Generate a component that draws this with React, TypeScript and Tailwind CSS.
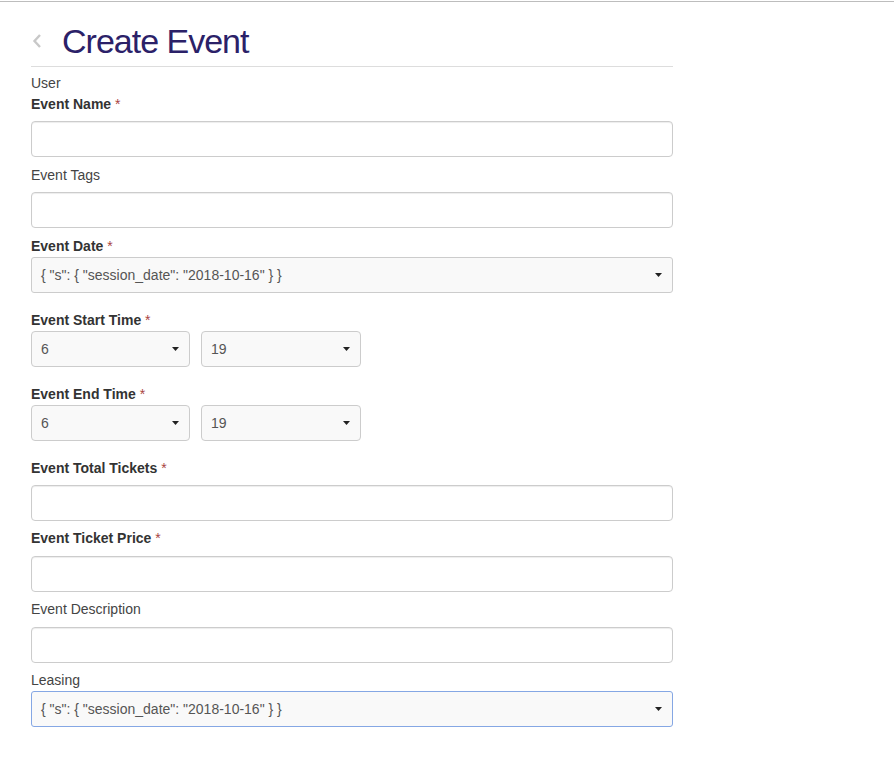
import React from 'react';

const font = { fontFamily: '"Liberation Sans", Arial, Helvetica, sans-serif' };

const Caret = () => (
  <svg width="7" height="4" viewBox="0 0 7 4" className="shrink-0">
    <path d="M0 0h7L3.5 4z" fill="#222" />
  </svg>
);

const Label: React.FC<{ text: string; required?: boolean; bold?: boolean; className?: string }> = ({
  text,
  required,
  bold = true,
  className = '',
}) => (
  <div className={`h-5 leading-5 text-[14px] ${bold ? 'font-bold text-[#333]' : 'text-[#444]'} ${className}`}>
    {text}
    {required && <span className="font-normal text-[#a94442]"> *</span>}
  </div>
);

const TextInput: React.FC<{ className?: string }> = ({ className = '' }) => (
  <div
    className={`h-9 w-full rounded-[4px] border border-[#ccc] bg-white shadow-[inset_0_1px_1px_rgba(0,0,0,0.075)] ${className}`}
  />
);

const SelectBox: React.FC<{ value: string; className?: string; focus?: boolean }> = ({
  value,
  className = '',
  focus,
}) => (
  <div
    className={`flex h-9 items-center justify-between rounded-[3px] border bg-[#f9f9f9] pl-[9px] pr-[10px] text-[14px] text-[#555] ${
      focus ? 'border-[#85a7e4]' : 'border-[#ccc]'
    } ${className}`}
  >
    <span>{value}</span>
    <Caret />
  </div>
);

const sessionValue = '{ "s": { "session_date": "2018-10-16" } }';

export default function App() {
  return (
    <div className="min-h-[769px] w-full bg-white" style={font}>
      <div className="h-px" />
      <div className="h-px bg-[#bdbdbd]" />
      <div className="ml-[31px] w-[642px]">
        <div className="mt-[19px] flex h-[46px] items-start border-b border-[#ddd]">
          <div className="flex h-10 w-[31px] items-center">
            <svg width="12" height="16" viewBox="0 0 12 16" className="ml-[1px]">
              <polyline points="8,2 2.5,8 8,14" fill="none" stroke="#c8c8c8" strokeWidth="2.4" />
            </svg>
          </div>
          <h1 className="h-10 text-[34px] leading-10 tracking-[-1px] text-[#2b2168]">Create Event</h1>
        </div>

        <Label text="User" bold={false} className="mt-[6px]" />
        <Label text="Event Name" required className="mt-px" />
        <TextInput className="mt-[7px]" />

        <Label text="Event Tags" bold={false} className="mt-2" />
        <TextInput className="mt-[7px]" />

        <Label text="Event Date" required className="mt-2" />
        <SelectBox value={sessionValue} className="mt-px w-full" />

        <Label text="Event Start Time" required className="mt-[17px]" />
        <div className="mt-px flex gap-[11px]">
          <SelectBox value="6" className="w-[159px] rounded-[4px]" />
          <SelectBox value="19" className="w-[160px] rounded-[4px]" />
        </div>

        <Label text="Event End Time" required className="mt-[17px]" />
        <div className="mt-px flex gap-[11px]">
          <SelectBox value="6" className="w-[159px] rounded-[4px]" />
          <SelectBox value="19" className="w-[160px] rounded-[4px]" />
        </div>

        <Label text="Event Total Tickets" required className="mt-[17px]" />
        <TextInput className="mt-[7px]" />

        <Label text="Event Ticket Price" required className="mt-[7px]" />
        <TextInput className="mt-2" />

        <Label text="Event Description" bold={false} className="mt-[7px]" />
        <TextInput className="mt-2" />

        <Label text="Leasing" bold={false} className="mt-[7px]" />
        <SelectBox value={sessionValue} focus className="mt-px w-full" />
      </div>
    </div>
  );
}
